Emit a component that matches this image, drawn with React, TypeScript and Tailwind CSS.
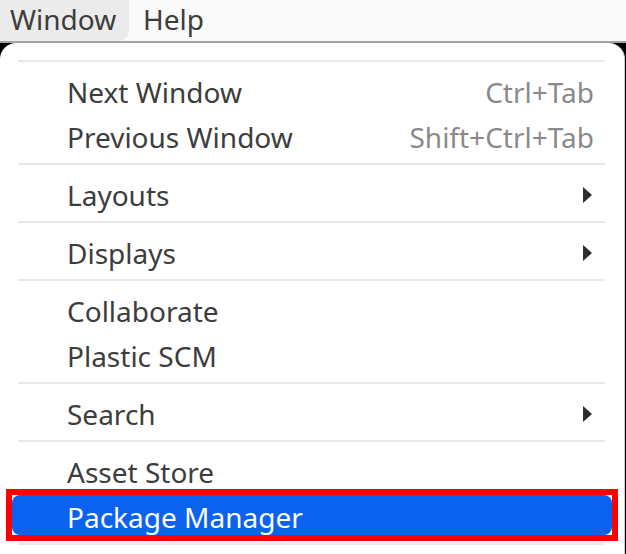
import React from 'react'

type Item = { label: string, shortcut?: string, submenu?: boolean, active?: boolean }

const groups: Item[][] = [
    [
        { label: 'Next Window', shortcut: 'Ctrl+Tab' },
        { label: 'Previous Window', shortcut: 'Shift+Ctrl+Tab' },
    ],
    [{ label: 'Layouts', submenu: true }],
    [{ label: 'Displays', submenu: true }],
    [{ label: 'Collaborate' }, { label: 'Plastic SCM' }],
    [{ label: 'Search', submenu: true }],
    [{ label: 'Asset Store' }, { label: 'Package Manager', active: true }],
]

function Arrow() {
    return (
        <svg width="10" height="16" viewBox="0 0 10 16" className="mr-[2px]">
            <path d="M1 0 L10 8 L1 16 Z" fill="#2d2d2d" />
        </svg>
    )
}

function Row({ item }: { item: Item }) {
    return (
        <div className="h-[45px] pt-[3px] pb-[2px]">
            <div className={item.active ? 'h-full outline-[6px] outline-solid outline-[#ff0000]' : 'h-full'}>
                <div
                    className={
                        item.active
                            ? 'h-full flex items-center pt-[3px] pl-[55px] pr-[18px] rounded-[8px] bg-[#0b62ee] text-white'
                            : 'h-full flex items-center pt-[3px] pl-[55px] pr-[18px] rounded-[8px] text-[#3d3d3d]'
                    }
                >
                    <span className="flex-1">{item.label}</span>
                    {item.shortcut && <span className="text-[#8a8a8a]">{item.shortcut}</span>}
                    {item.submenu && <Arrow />}
                </div>
            </div>
        </div>
    )
}

export default function App() {
    return (
        <div className="w-[626px] h-[554px] overflow-hidden bg-white text-[28px] leading-none font-['Noto_Sans',sans-serif]">
            {/* menubar */}
            <div className="h-[43px] flex bg-[#fafafa] border-b-2 border-[#a3a3a3] text-[#3d3d3d]">
                <div className="w-[129px] pl-[10px] pt-[5px] bg-[#ebebeb] rounded-br-[10px]">Window</div>
                <div className="pl-[14px] pt-[5px]">Help</div>
            </div>

            {/* dropdown */}
            <div className="bg-black">
                <div className="w-[625px] bg-white rounded-tl-[16px] rounded-tr-[16px] border-r border-[#cfcfcf] pt-[17px] px-[12px] h-[511px]">
                    {groups.map((g, i) => (
                        <div key={i}>
                            <div className="h-[2px] mx-[6px] mr-[7px] bg-[#e8e8e8]" />
                            <div className="pt-[5px] pb-[6px]">
                                {g.map((item) => (
                                    <Row key={item.label} item={item} />
                                ))}
                            </div>
                        </div>
                    ))}
                    <div className="h-[2px] mx-[6px] mr-[7px] bg-[#e8e8e8]" />
                </div>
            </div>
        </div>
    )
}
